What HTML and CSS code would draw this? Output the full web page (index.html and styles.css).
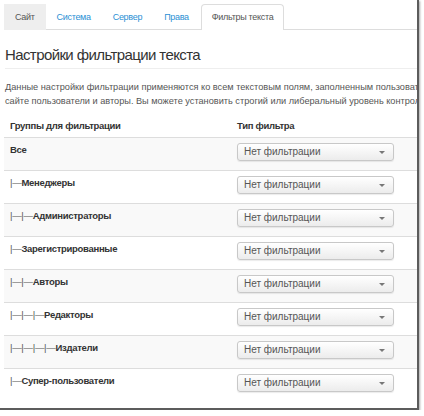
FILE: index.html
```html
<!DOCTYPE html>
<html lang="ru">
<head>
    <meta charset="UTF-8">
    <title>Фильтры текста</title>
    <link rel="stylesheet" href="styles.css">
</head>
<body>
    <div class="window">
        <!-- Tabs -->
        <ul class="tabs">
            <li class="tab tab-hover">Сайт</li>
            <li class="tab">Система</li>
            <li class="tab">Сервер</li>
            <li class="tab">Права</li>
            <li class="tab tab-active">Фильтры текста</li>
        </ul>

        <h2 class="page-title">Настройки фильтрации текста</h2>
        <p class="intro">Данные настройки фильтрации применяются ко всем текстовым полям, заполненным пользователями на<br>сайте пользователи и авторы. Вы можете установить строгий или либеральный уровень контроля.</p>

        <!-- Filter table -->
        <table class="filters">
            <thead>
                <tr>
                    <th class="col-group">Группы для фильтрации</th>
                    <th>Тип фильтра</th>
                </tr>
            </thead>
            <tbody>
                <tr>
                    <td class="group">Все</td>
                    <td><div class="select"><span>Нет фильтрации</span><i class="caret"></i></div></td>
                </tr>
                <tr>
                    <td class="group"><span class="indent">|—</span>Менеджеры</td>
                    <td><div class="select"><span>Нет фильтрации</span><i class="caret"></i></div></td>
                </tr>
                <tr>
                    <td class="group"><span class="indent">|—|—</span>Администраторы</td>
                    <td><div class="select"><span>Нет фильтрации</span><i class="caret"></i></div></td>
                </tr>
                <tr>
                    <td class="group"><span class="indent">|—</span>Зарегистрированные</td>
                    <td><div class="select"><span>Нет фильтрации</span><i class="caret"></i></div></td>
                </tr>
                <tr>
                    <td class="group"><span class="indent">|—|—</span>Авторы</td>
                    <td><div class="select"><span>Нет фильтрации</span><i class="caret"></i></div></td>
                </tr>
                <tr>
                    <td class="group"><span class="indent">|—|—|—</span>Редакторы</td>
                    <td><div class="select"><span>Нет фильтрации</span><i class="caret"></i></div></td>
                </tr>
                <tr>
                    <td class="group"><span class="indent">|—|—|—|—</span>Издатели</td>
                    <td><div class="select"><span>Нет фильтрации</span><i class="caret"></i></div></td>
                </tr>
                <tr>
                    <td class="group"><span class="indent">|—</span>Супер-пользователи</td>
                    <td><div class="select"><span>Нет фильтрации</span><i class="caret"></i></div></td>
                </tr>
            </tbody>
        </table>
    </div>
</body>
</html>
```

FILE: styles.css
```css
/* General Styles */
body {
    margin: 0;
    font-family: "Liberation Sans", Arial, sans-serif;
    background: #fff;
    color: #333;
}

/* Screenshot frame */
.window {
    width: 419px;
    height: 410px;
    padding-left: 4px;
    box-sizing: border-box;
    overflow: hidden;
    border-right: 2px solid #5c5c5c;
    border-bottom: 2px solid #5c5c5c;
    box-shadow: 1px 1px 2px rgba(0, 0, 0, 0.35);
}

/* Tabs */
.tabs {
    list-style: none;
    margin: 4px -4px 0 0;
    padding: 0;
    display: flex;
    border-bottom: 1px solid #ddd;
}
.tab {
    height: 26px;
    line-height: 25px;
    padding: 0 10px;
    font-size: 9px;
    letter-spacing: -0.3px;
    color: #2b90d4;
    border: 1px solid transparent;
    border-bottom: none;
    border-radius: 4px 4px 0 0;
    margin-bottom: -1px;
    box-sizing: border-box;
}
.tab-hover {
    background: #eee;
    color: #555;
    border-radius: 0;
}
.tab-active {
    background: #fff;
    color: #555;
    border-color: #ddd;
    margin-left: 1px;
}

/* Heading */
.page-title {
    margin: 15px -4px 0 1px;
    padding-bottom: 3px;
    font-size: 15px;
    letter-spacing: -0.6px;
    line-height: 20px;
    font-weight: normal;
    color: #333;
    border-bottom: 1px solid #eee;
}
.intro {
    margin: 11px 0 5px 1px;
    font-size: 9.2px;
    line-height: 14px;
    color: #555;
    white-space: nowrap;
}

/* Table */
.filters {
    width: 416px;
    table-layout: fixed;
    border-collapse: collapse;
    font-size: 9px;
}
.filters th {
    text-align: left;
    font-weight: bold;
    font-size: 9.5px;
    letter-spacing: -0.3px;
    line-height: 14px;
    padding: 6px 6px 4px;
    border-bottom: 1px solid #ddd;
}
.filters th.col-group {
    width: 215px;
}
.filters td {
    vertical-align: top;
    padding: 5px 6px 9px;
    border-top: 1px solid #ddd;
}
.filters tbody tr:nth-child(odd) td {
    background: #f9f9f9;
}
.filters tbody tr:first-child td {
    border-top: none;
}
.group {
    font-weight: bold;
    font-size: 9.5px;
    letter-spacing: -0.3px;
    line-height: 14px;
    color: #333;
}
.indent {
    font-weight: normal;
    color: #555;
}

/* Fake select */
.select {
    position: relative;
    width: 157px;
    height: 18px;
    box-sizing: border-box;
    border: 1px solid #c8c8c8;
    border-radius: 3px;
    background: linear-gradient(#fff, #ececec);
    box-shadow: 0 1px 1px rgba(0, 0, 0, 0.08);
    color: #555;
    font-size: 10px;
    line-height: 16px;
    padding-left: 6px;
}
.caret {
    position: absolute;
    right: 8px;
    top: 7px;
    border-left: 3px solid transparent;
    border-right: 3px solid transparent;
    border-top: 3px solid #777;
}
```
